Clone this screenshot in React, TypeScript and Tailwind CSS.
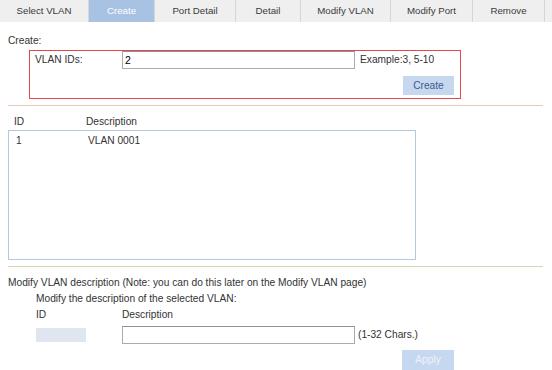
import React from "react";

const tabs = [
  { label: "Select VLAN", w: 88 },
  { label: "Create", w: 65, active: true },
  { label: "Port Detail", w: 80 },
  { label: "Detail", w: 64 },
  { label: "Modify VLAN", w: 89 },
  { label: "Modify Port", w: 81 },
  { label: "Remove", w: 71 },
];

export default function App() {
  return (
    <div
      className="w-[552px] h-[370px] overflow-hidden bg-white text-[10.2px] text-[#333333] leading-[14px]"
      style={{ fontFamily: '"Liberation Sans", Arial, sans-serif' }}
    >
      {/* Tab bar */}
      <div className="flex h-[22px] bg-[#efefef]">
        {tabs.map((t) => (
          <div key={t.label} className="flex">
            <div
              className={
                t.active
                  ? "flex items-center justify-center h-[22px] bg-[#a8c2e4] text-white text-[9.7px]"
                  : "flex items-center justify-center h-[22px] bg-[#efefef] text-[#3a3a3a] text-[9.7px]"
              }
              style={{ width: t.w }}
            >
              {t.label}
            </div>
            <div className="w-[1px] h-[22px] bg-[#d6d6d6]" />
          </div>
        ))}
        <div className="flex-1 bg-[#efefef]" />
      </div>

      {/* Create section */}
      <div className="pl-[8px] mt-[12px] h-[14px]">Create:</div>
      <div className="ml-[29px] mt-[2px] w-[432px] h-[49px] border border-[#e2474c]">
        <div className="flex items-center h-[18px]">
          <div className="w-[92px] pl-[5px]">VLAN IDs:</div>
          <div className="w-[233px] h-[18px] border border-[#a5acb5] border-t-[#8c939c] bg-white pl-[2px] flex items-center text-[10.5px] text-black">
            2
          </div>
          <div className="ml-[5px]">Example:3, 5-10</div>
        </div>
        <div className="flex justify-end pr-[6px] mt-[7px]">
          <div className="w-[51px] h-[19px] bg-[#c6d8f0] text-[#3b5b8f] flex items-center justify-center">
            Create
          </div>
        </div>
      </div>

      <div className="ml-[8px] mt-[6px] w-[535px] h-[1px] bg-[#e9c9b4]" />

      {/* List */}
      <div className="flex mt-[9px] h-[14px]">
        <div className="w-[86px] pl-[14px]">ID</div>
        <div>Description</div>
      </div>
      <div className="ml-[8px] mt-[1px] w-[408px] h-[130px] border border-[#b4c8de] bg-white">
        <div className="flex mt-[3px] h-[14px]">
          <div className="w-[79px] pl-[7px]">1</div>
          <div>VLAN 0001</div>
        </div>
      </div>

      <div className="ml-[8px] mt-[6px] w-[535px] h-[1px] bg-[#d3d6b3]" />

      {/* Modify description */}
      <div className="pl-[8px] mt-[9px] h-[14px]">
        Modify VLAN description (Note: you can do this later on the Modify VLAN page)
      </div>
      <div className="pl-[36px] mt-[2px] h-[14px]">
        Modify the description of the selected VLAN:
      </div>
      <div className="flex mt-[2px] h-[14px]">
        <div className="w-[122px] pl-[36px]">ID</div>
        <div>Description</div>
      </div>
      <div className="flex items-start mt-[4px] h-[18px]">
        <div className="ml-[36px] mt-[2px] w-[50px] h-[14px] bg-[#dfe6f0]" />
        <div className="ml-[36px] w-[233px] h-[18px] border border-[#a5acb5] border-t-[#8c939c] bg-white" />
        <div className="ml-[3px] mt-[2px]">(1-32 Chars.)</div>
      </div>
      <div className="flex mt-[6px]">
        <div className="ml-[402px] w-[52px] h-[20px] bg-[#c6d8f0] text-[#eef3fa] flex items-center justify-center">
          Apply
        </div>
      </div>
    </div>
  );
}
